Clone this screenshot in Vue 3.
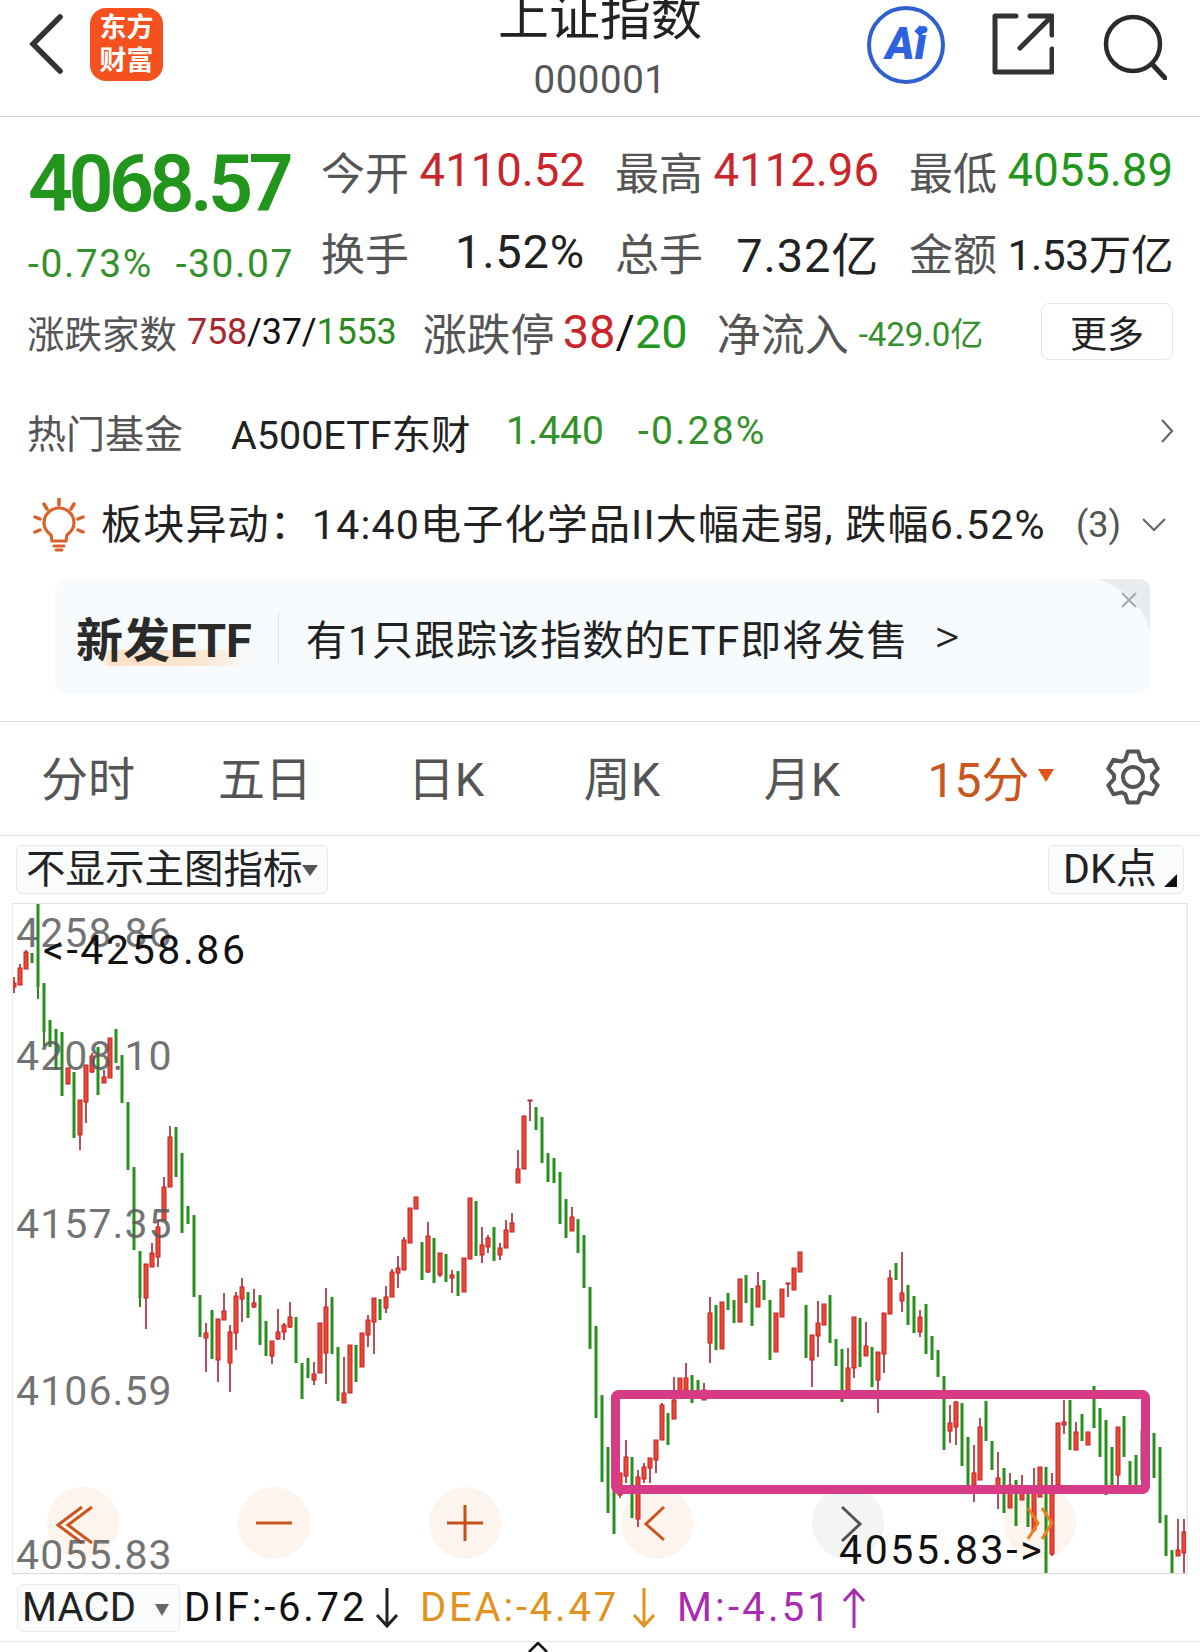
<template>
  <div class="page">
    <header class="head">
      <div class="head-left">
        <svg class="back" width="36" height="60" viewBox="0 0 36 60"><path d="M32 3 5 30l27 27" fill="none" stroke="#333" stroke-width="5.5" stroke-linecap="round" stroke-linejoin="miter" /></svg>
        <div class="logo"><span>东方</span><span>财富</span></div>
      </div>
      <div class="title">
        <div class="name">上证指数</div>
        <div class="code">000001</div>
      </div>
      <div class="head-right">
        <div class="ai"><span>Ai</span><i></i></div>
        <svg width="62" height="62" viewBox="0 0 62 62" class="share"><path d="M24 3H3v56h57V36M60 22V3H38M58 5 28 35" fill="none" stroke="#333" stroke-width="5" stroke-linejoin="round" stroke-linecap="round" /></svg>
        <svg width="64" height="66" viewBox="0 0 64 66" class="search"><circle cx="30" cy="30" r="27" fill="none" stroke="#2b2b2b" stroke-width="4.5" /><path d="m49 50 13 14" stroke="#2b2b2b" stroke-width="5" stroke-linecap="round" /></svg>
      </div>
    </header>

    <section class="quote">
      <div class="quote-left">
        <div class="price">4068.57</div>
        <div class="change"><span>-0.73%</span><span>-30.07</span></div>
      </div>
      <div class="stats">
        <div class="stat" v-for="s in stats" :key="s.label">
          <span class="stat-label">{{ s.label }}</span>
          <span class="stat-value" :class="s.cls">{{ s.value }}</span>
        </div>
      </div>
    </section>

    <div class="breadth">
      <span class="lb37">涨跌家数</span>
      <span class="counts"><b class="red2">758</b>/37/<b class="green2">1553</b></span>
      <span class="lb42 limit-label">涨跌停</span>
      <span class="limit"><b class="red">38</b>/<b class="green">20</b></span>
      <span class="lb42 inflow-label">净流入</span>
      <span class="inflow">-429.0亿</span>
      <button class="more">更多</button>
    </div>

    <div class="fund">
      <span class="fund-label">热门基金</span>
      <span class="fund-name">A500ETF东财</span>
      <span class="fund-price">1.440</span>
      <span class="fund-pct">-0.28%</span>
      <svg class="fund-arrow" width="14" height="26" viewBox="0 0 14 26"><path d="m2 2 10 11L2 24" fill="none" stroke="#666" stroke-width="2.2" /></svg>
    </div>

    <div class="notice">
      <svg class="bulb" width="52" height="54" viewBox="0 0 52 54">
        <g fill="none" stroke="#d9622a" stroke-linecap="round">
          <path d="M18 37c-4-3-7-7-7-12a15 15 0 0 1 30 0c0 5-3 9-7 12l-1 6H19z" stroke-width="3.2" />
          <path d="M26 1v6M11 6l3 5M41 6l-3 5M2 19l5 2M50 19l-5 2M2 34l5-2M50 34l-5-2" stroke-width="3.5" />
          <path d="M21 48h10" stroke-width="3" />
          <path d="M23 52h6" stroke-width="3" />
        </g>
      </svg>
      <span class="notice-text">板块异动：14:40电子化学品II大幅走弱, 跌幅6.52%</span>
      <span class="notice-count">(3)</span>
      <svg width="26" height="16" viewBox="0 0 26 16"><path d="m2 2 11 11L24 2" fill="none" stroke="#666" stroke-width="2.2" /></svg>
    </div>

    <div class="banner">
      <span class="banner-title">新发ETF</span>
      <span class="banner-line"></span>
      <span class="banner-text">有1只跟踪该指数的ETF即将发售</span>
      <span class="banner-gt">&gt;</span>
      <svg class="banner-close" width="52" height="52" viewBox="0 0 52 52">
        <path d="M2 0h38q12 0 12 12v40Q44 18 2 0z" fill="#e9ecee" />
        <path d="m24 14 14 14M38 14 24 28" stroke="#a8adb0" stroke-width="2.4" />
      </svg>
    </div>

    <nav class="tabs">
      <span>分时</span>
      <span>五日</span>
      <span>日K</span>
      <span>周K</span>
      <span>月K</span>
      <span class="tab-on">15分<i></i></span>
      <svg width="56" height="58" viewBox="-28 -29 56 58" class="gear">
        <path :d="gearPath" fill="none" stroke="#555" stroke-width="4" stroke-linejoin="round" />
        <circle r="10" fill="none" stroke="#555" stroke-width="4" />
      </svg>
    </nav>

    <div class="tools">
      <div class="pick pick-main">不显示主图指标<i></i></div>
      <div class="pick pick-dk">DK点<i></i></div>
    </div>

    <div class="chart">
      <svg class="kline" width="1176" height="669" viewBox="12 904 1176 669">
        <circle v-for="c in roundBtns" :key="c" :cx="c" cy="1523" r="36" :fill="c === 848 ? '#f3f5f4' : '#fdf4ee'" />
        <g v-for="c in candles" :key="c.x">
          <line :x1="c.x" :x2="c.x" :y1="c.h" :y2="c.l" :stroke="c.up ? '#a8222a' : '#2a8a1e'" :stroke-width="c.up ? 1.6 : 2" />
          <rect :x="c.x - (c.up ? 2 : 1.5)" :y="c.t" :width="c.up ? 4 : 3" :height="c.b - c.t" :fill="c.up ? '#ea4a30' : '#27901d'" :stroke="c.up ? '#c2202c' : 'none'" />
        </g>
        <rect x="615.5" y="1394.5" width="530" height="95" rx="3" fill="none" stroke="#d83b85" stroke-width="9" />
        <g fill="none" stroke-width="3">
          <path d="M92 1507 68 1525l24 18M82 1507l-24 18 24 18" stroke="#c9561c" />
          <path d="M256 1523h36" stroke="#c9561c" />
          <path d="M447 1523h36M465 1505v36" stroke="#c4501a" />
          <path d="M664 1507l-18 17 18 16" stroke="#c9561c" />
          <path d="M842 1507l18 17-18 17" stroke="#555" />
          <path d="M1028 1508l10 15-10 16M1042 1508l10 15-10 16" stroke="#e8801f" />
        </g>
      </svg>
      <span class="axis a1">4258.86</span>
      <span class="axis a2">4208.10</span>
      <span class="axis a3">4157.35</span>
      <span class="axis a4">4106.59</span>
      <span class="axis a5">4055.83</span>
      <span class="mark mark-high">&lt;-4258.86</span>
      <span class="mark mark-low">4055.83-&gt;</span>
    </div>

    <div class="macd">
      <div class="macd-pick">MACD<i></i></div>
      <span class="dif">DIF:-6.72</span>
      <svg class="arr" width="24" height="44" viewBox="0 0 24 44"><path d="M12 2v38M2 29l10 11 10-11" fill="none" stroke="#222" stroke-width="3" /></svg>
      <span class="dea">DEA:-4.47</span>
      <svg class="arr" width="24" height="44" viewBox="0 0 24 44"><path d="M12 2v38M2 29l10 11 10-11" fill="none" stroke="#e2921f" stroke-width="3" /></svg>
      <span class="mm">M:-4.51</span>
      <svg class="arr" width="24" height="44" viewBox="0 0 24 44"><path d="M12 42V4M2 15 12 4l10 11" fill="none" stroke="#a92bb0" stroke-width="3" /></svg>
    </div>
    <svg class="foot-arrow" width="22" height="10" viewBox="0 0 22 10"><path d="M2 10 11 1l9 9" fill="none" stroke="#111" stroke-width="2.6" /></svg>
  </div>
</template>

<script setup>
const stats = [
  { label: '今开', value: '4110.52', cls: 'red' },
  { label: '最高', value: '4112.96', cls: 'red' },
  { label: '最低', value: '4055.89', cls: 'green' },
  { label: '换手', value: '1.52%', cls: 'dark' },
  { label: '总手', value: '7.32亿', cls: 'dark' },
  { label: '金额', value: '1.53万亿', cls: 'dark small' }
]

const roundBtns = [83, 274, 465, 657, 848, 1040]

// high, low, body top, body bottom; 1 in front means a rising candle
const raw = [
  [1,977,993,983,987],[1,964,985,968,985],[1,950,969,952,969],[0,953,963],[0,904,999,904,987],[0,983,1046,983,1032],
  [0,1020,1047],[0,1029,1070],[0,1032,1096],[1,1068,1084,1068,1084],[0,1072,1138],[1,1100,1150,1100,1135],
  [1,1065,1123,1065,1102],[1,1053,1073,1056,1072],[0,1047,1095],[1,1070,1083,1077,1083],[1,1038,1078,1038,1078],[0,1029,1063],
  [0,1055,1103],[0,1102,1170],[0,1167,1250],[0,1251,1307,1251,1298],[1,1264,1329,1264,1298],[1,1243,1267,1253,1267],
  [1,1220,1267,1227,1257],[1,1177,1220,1187,1220],[1,1126,1187,1137,1187],[0,1127,1177],[0,1153,1233],[0,1206,1224],
  [0,1215,1297],[0,1295,1337],[1,1323,1372,1333,1338],[0,1310,1359],[1,1319,1382,1319,1360],[1,1293,1320,1311,1320],
  [1,1325,1392,1332,1363],[1,1292,1350,1296,1333],[1,1278,1322,1287,1299],[0,1292,1318],[1,1289,1308,1303,1307],[0,1295,1345],
  [0,1321,1356],[1,1341,1364,1341,1356],[1,1309,1340,1332,1339],[1,1323,1340,1325,1332],[1,1302,1328,1317,1327],[0,1317,1363],
  [0,1363,1399],[0,1358,1378],[1,1362,1385,1374,1380],[1,1323,1373,1323,1373],[1,1288,1384,1307,1353],[0,1297,1354],
  [0,1347,1401],[1,1357,1403,1393,1403],[1,1345,1393,1345,1393],[0,1345,1382],[1,1333,1367,1333,1367],[1,1315,1347,1320,1335],
  [1,1298,1354,1298,1322],[0,1299,1320],[1,1286,1313,1297,1308],[1,1269,1297,1272,1297],[1,1256,1288,1268,1273],
  [1,1237,1270,1240,1270],[1,1208,1243,1208,1243],[1,1197,1209,1197,1209],[0,1242,1280],[1,1222,1273,1236,1272],[0,1238,1283],
  [1,1253,1277,1253,1275],[0,1254,1282],[1,1270,1293,1275,1278],[0,1271,1296],[1,1258,1292,1258,1292],[1,1198,1259,1198,1259],
  [0,1201,1256],[1,1227,1263,1245,1255],[1,1235,1253,1238,1247],[0,1227,1261],[1,1243,1260,1248,1255],[1,1220,1248,1230,1248],
  [1,1213,1232,1223,1232],[1,1150,1183,1169,1183],[1,1116,1169,1116,1169],[1,1100,1121,1100,1101],[0,1107,1130],[0,1117,1163],
  [0,1153,1182],[0,1158,1183],[0,1172,1224],[0,1199,1238],[1,1207,1231,1217,1231],[0,1219,1253],[0,1235,1288],
  [0,1287,1349],[0,1326,1418],[0,1395,1482],[0,1447,1513],[0,1480,1534],[1,1473,1498,1473,1495],[1,1440,1483,1457,1476],
  [0,1457,1518],[1,1470,1527,1477,1519],[1,1463,1483,1467,1479],[1,1458,1483,1458,1468],[1,1440,1473,1440,1460],[1,1403,1440,1405,1440],
  [0,1413,1445],[1,1377,1419,1400,1419],[1,1378,1392,1378,1392],[1,1363,1390,1378,1390],[0,1375,1403],[0,1380,1397],
  [1,1383,1400,1390,1400],[1,1297,1363,1313,1343],[0,1305,1350],[1,1302,1349,1302,1349],[0,1293,1310],[0,1300,1323],
  [1,1279,1322,1279,1322],[0,1275,1303],[0,1288,1326],[1,1272,1307,1286,1307],[0,1280,1300],[0,1300,1360],[1,1313,1352,1313,1352],
  [1,1289,1317,1289,1317],[1,1283,1297,1283,1284],[1,1268,1290,1268,1290],[1,1252,1272,1252,1272],[0,1305,1358],
  [1,1335,1387,1335,1360],[1,1301,1357,1323,1336],[1,1304,1325,1304,1325],[0,1295,1343],[0,1339,1366],[0,1349,1402],
  [1,1348,1393,1368,1390],[1,1317,1378,1317,1368],[0,1318,1367],[1,1322,1356,1346,1356],[0,1347,1387],[1,1352,1413,1352,1380],
  [1,1313,1373,1313,1354],[1,1270,1314,1278,1314],[0,1263,1280],[1,1252,1312,1293,1301],[0,1285,1325],[0,1296,1333],
  [1,1310,1337,1317,1332],[0,1304,1354],[0,1336,1360],[0,1350,1377],[0,1376,1450],[1,1405,1443,1423,1431],[1,1401,1445,1402,1427],
  [0,1403,1466],[0,1437,1487],[1,1445,1502,1473,1485],[1,1418,1480,1427,1480],[0,1401,1441],[0,1441,1470],[1,1452,1509,1478,1493],
  [0,1468,1513],[1,1473,1508,1485,1508],[0,1480,1526],[1,1475,1500,1493,1500],[0,1493,1527],[1,1468,1532,1490,1530],[1,1467,1497,1467,1497],
  [0,1467,1573],[1,1473,1556,1493,1554],[1,1423,1485,1423,1485],[1,1400,1434,1422,1425],[0,1400,1450],[1,1422,1450,1432,1450],
  [0,1414,1441],[1,1432,1445,1432,1445],[0,1386,1428],[0,1408,1457],[0,1420,1495],[0,1447,1485],[1,1427,1485,1427,1475],
  [0,1416,1457],[0,1461,1485],[0,1455,1485],[0,1430,1480],[0,1435,1478],[0,1433,1478],[0,1447,1523],[0,1515,1556],[0,1550,1573],
  [1,1519,1556,1550,1556],[1,1519,1573,1532,1553]
]

const candles = raw.map((c, i) => ({
  x: 14 + i * 6,
  up: c[0] === 1,
  h: c[1],
  l: c[2],
  t: c[3] ?? c[1],
  b: c[4] ?? c[2]
}))

function buildGear() {
  // six rounded teeth round the hub
  const pts = []
  for (let i = 0; i < 6; i++) {
    const a = (i * 60 - 90) * Math.PI / 180
    for (const [d, r] of [[-0.42, 19], [-0.2, 26], [0.2, 26], [0.42, 19]]) {
      pts.push((Math.cos(a + d) * r).toFixed(1) + ' ' + (Math.sin(a + d) * r).toFixed(1))
    }
  }
  return 'M' + pts.join('L') + 'Z'
}
const gearPath = buildGear()
</script>

<style scoped>
.page {
  width: 1200px;
  height: 1652px;
  overflow: hidden;
  background: #fff;
  color: #222;
  font-family: Roboto, "Noto Sans CJK SC", sans-serif;
}
.head {
  height: 116px;
  border-bottom: 1px solid #d8d8d8;
  display: grid;
  grid-template-columns: 1fr auto 1fr;
  overflow: hidden;
}
.head-left {
  display: flex;
  align-items: flex-start;
  padding: 14px 0 0 28px;
}
.logo {
  width: 73px;
  height: 73px;
  margin: -6px 0 0 26px;
  background: #f4511e;
  border-radius: 16px;
  color: #fff;
  font-size: 27px;
  font-weight: 700;
  line-height: 33px;
  display: flex;
  flex-direction: column;
  align-items: center;
  justify-content: center;
}
.title {
  text-align: center;
  margin-top: -10px;
}
.name {
  font-size: 51px;
  line-height: 56px;
  color: #222;
}
.code {
  font-size: 38.5px;
  line-height: 50px;
  margin-top: 9px;
  letter-spacing: 0.5px;
  color: #555;
}
.head-right {
  display: flex;
  align-items: flex-start;
  justify-content: flex-end;
  padding: 6px 33px 0 0;
}
.ai {
  position: relative;
  width: 78px;
  height: 78px;
  box-sizing: border-box;
  border: 4px solid #2f5fd0;
  border-radius: 50%;
  color: #2f62e0;
  font-size: 44px;
  font-weight: 900;
  font-style: italic;
  line-height: 68px;
  text-align: center;
}
.ai i {
  position: absolute;
  right: 17px;
  top: 17px;
  width: 8px;
  height: 8px;
  background: #2f62e0;
  transform: rotate(45deg);
}
.share {
  margin: 7px 0 0 47px;
}
.search {
  margin: 8px 0 0 49px;
}

.quote {
  display: flex;
  padding: 13px 27px 0 28px;
}
.quote-left {
  width: 293px;
  flex: none;
}
.price {
  font-size: 79px;
  font-weight: 600;
  line-height: 80px;
  margin-top: 14px;
  letter-spacing: -4.6px;
  color: #22951c;
}
.change {
  display: flex;
  justify-content: space-between;
  width: 266px;
  margin-top: 20px;
  font-size: 39px;
  line-height: 40px;
  letter-spacing: 1.6px;
  color: #33902a;
}
.stats {
  display: grid;
  grid-template-columns: repeat(3, 264px);
  grid-auto-rows: 81px;
  column-gap: 30px;
}
.stat {
  display: flex;
  align-items: center;
  justify-content: space-between;
}
.stat-label {
  font-size: 44px;
  color: #555;
}
.stat-value {
  font-size: 45.5px;
}
.red { color: #c9252b; }
.green { color: #22951c; }
.red2 { color: #a8272d; font-weight: 400; }
.green2 { color: #2a8a1e; font-weight: 400; }
.stat-value.dark {
  color: #222;
  font-size: 47px;
  letter-spacing: 0.8px;
}
.stat-value.small {
  font-size: 42.5px;
  letter-spacing: -0.4px;
}

.breadth {
  display: flex;
  align-items: center;
  height: 57px;
  margin-top: 11px;
  padding: 0 27px 0 27px;
}
.lb37 {
  font-size: 37.5px;
  color: #555;
}
.lb42 {
  font-size: 44px;
  color: #555;
}
.counts {
  font-size: 36px;
  margin-left: 10px;
  color: #111;
  letter-spacing: -0.2px;
}
.limit-label {
  margin-left: 26px;
}
.limit {
  font-size: 47px;
  margin-left: 8px;
  color: #111;
}
.limit b {
  font-weight: 400;
}
.inflow-label {
  margin-left: 29px;
}
.inflow {
  font-size: 33px;
  margin-left: 10px;
  letter-spacing: -0.1px;
  color: #33902a;
}
.more {
  margin-left: auto;
  width: 132px;
  height: 57px;
  padding: 0;
  background: #fff;
  border: 1px solid #e4e4e4;
  border-radius: 8px;
  font-family: inherit;
  font-size: 37px;
  color: #222;
}

.fund {
  display: flex;
  align-items: center;
  height: 68px;
  margin-top: 37px;
  padding: 0 26px 0 27px;
  font-size: 39px;
}
.fund-label {
  color: #555;
  width: 204px;
}
.fund-name {
  width: 275px;
  font-size: 39.5px;
  color: #222;
  white-space: nowrap;
}
.fund-price {
  width: 132px;
  color: #33902a;
}
.fund-pct {
  color: #33902a;
  letter-spacing: 2.2px;
}
.fund-arrow {
  margin-left: auto;
}

.notice {
  display: flex;
  align-items: center;
  height: 68px;
  margin-top: 26px;
  padding-left: 33px;
}
.notice-text {
  font-size: 41px;
  margin: -8px 0 0 16px;
  letter-spacing: 1.2px;
  white-space: nowrap;
  width: 975px;
}
.notice-count {
  font-size: 36px;
  color: #555;
  width: 65px;
}

.banner {
  position: relative;
  display: flex;
  align-items: center;
  height: 115px;
  margin: 20px 50px 27px 55px;
  padding-left: 21px;
  background: #f7fbfd;
  border-radius: 12px;
}
.banner-title {
  font-size: 47px;
  font-weight: 700;
  color: #2a2a2a;
  white-space: nowrap;
  background: linear-gradient(90deg, transparent 14%, #fbe0c4 20%, #fbe6d0 70%, transparent) no-repeat 0 90% / 100% 16px;
}
.banner-line {
  width: 1px;
  height: 52px;
  margin-left: 26px;
  background: #dfe3e6;
}
.banner-text {
  font-size: 41px;
  margin-left: 27px;
  color: #222;
  letter-spacing: 1.05px;
  white-space: nowrap;
}
.banner-gt {
  font-size: 48px;
  font-weight: 300;
  margin-left: 26px;
}
.banner-close {
  position: absolute;
  right: 0;
  top: 0;
}

.tabs {
  border-top: 1px solid #ddd;
  border-bottom: 1px solid #ddd;
  box-sizing: border-box;
  height: 115px;
  padding-bottom: 6px;
  display: grid;
  grid-template-columns: 176px 178px 184px 168px 192px 186px 1fr;
  align-items: center;
  justify-items: center;
  font-size: 47px;
  color: #555;
}
.tab-on {
  color: #c9561c;
  display: flex;
  align-items: center;
  font-size: 48px;
}
.tab-on i {
  width: 0;
  height: 0;
  margin-left: 9px;
  border: 8px solid transparent;
  border-top: 13px solid #e2561a;
  border-bottom: 0;
}
.gear {
  justify-self: start;
  margin: 2px 0 0 21px;
}

.tools {
  display: flex;
  justify-content: space-between;
  padding: 9px 16px 9px;
  height: 49px;
}
.pick {
  position: relative;
  box-sizing: border-box;
  height: 49px;
  line-height: 47px;
  font-size: 39.5px;
  color: #222;
  background: #f9fbfc;
  border: 1px solid #e8e8e8;
  border-radius: 6px;
}
.pick-main {
  width: 312px;
  padding-left: 9px;
  white-space: nowrap;
}
.pick-main i {
  position: absolute;
  right: 9px;
  top: 19px;
  border: 8px solid transparent;
  border-top: 11px solid #555;
  border-bottom: 0;
}
.pick-dk {
  width: 136px;
  padding-left: 14px;
  font-size: 41px;
}
.pick-dk i {
  position: absolute;
  right: 6px;
  bottom: 6px;
  border-style: solid;
  border-width: 0 0 13px 13px;
  border-color: transparent transparent #111 transparent;
}

.chart {
  position: relative;
  height: 669px;
  margin: 0 12px;
  border-top: 1px solid #e2e2e2;
  border-bottom: 1px solid #d8d8d8;
}
.kline {
  display: block;
}
.chart::after {
  content: "";
  position: absolute;
  inset: 0;
  border-left: 1px solid #ececec;
  border-right: 2px solid #ececec;
  pointer-events: none;
}
.axis {
  position: absolute;
  left: 4px;
  font-size: 41px;
  line-height: 44px;
  letter-spacing: 1.1px;
  color: rgba(90, 90, 90, 0.85);
}
.a1 { top: 7px; }
.a2 { top: 130px; }
.a3 { top: 298px; }
.a4 { top: 465px; }
.a5 { top: 629px; }
.mark {
  position: absolute;
  font-size: 41px;
  line-height: 44px;
  letter-spacing: 2.6px;
  color: #111;
}
.mark-high {
  left: 31px;
  top: 24px;
}
.mark-low {
  left: 827px;
  top: 624px;
}

.macd {
  display: flex;
  align-items: center;
  height: 67px;
  padding-left: 17px;
  border-bottom: 1px solid #e6e6e6;
  font-size: 40px;
  letter-spacing: 2.8px;
}
.macd-pick {
  position: relative;
  box-sizing: border-box;
  width: 163px;
  height: 48px;
  padding-left: 4px;
  line-height: 46px;
  letter-spacing: 0.2px;
  background: #f9fbfc;
  border: 1px solid #e8e8e8;
  border-radius: 6px;
}
.macd-pick i {
  position: absolute;
  right: 10px;
  top: 19px;
  border: 7px solid transparent;
  border-top: 12px solid #666;
  border-bottom: 0;
}
.dif {
  margin-left: 4px;
  width: 191px;
  color: #111;
  white-space: nowrap;
}
.dea {
  margin-left: 21px;
  width: 212px;
  color: #e2921f;
  white-space: nowrap;
}
.mm {
  margin-left: 21px;
  width: 165px;
  letter-spacing: 3.2px;
  color: #a92bb0;
  white-space: nowrap;
}
.foot-arrow {
  display: block;
  margin-left: 527px;
}
</style>
